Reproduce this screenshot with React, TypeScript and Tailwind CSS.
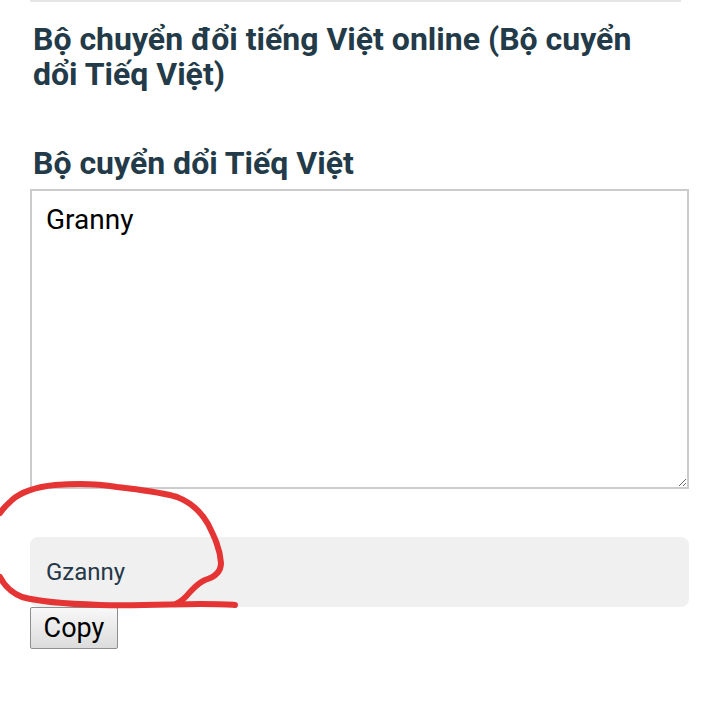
export default function App() {
  return (
    <div className="relative min-h-[724px] w-[717px] bg-white font-['Roboto',sans-serif]">
      <div className="pl-[30px] pr-[28px]">
        {/* top rule */}
        <div className="h-[2px] bg-[#e6e6e6] mr-[8px]" />

        <h1 className="mt-[20px] ml-[3px] max-w-[630px] text-[32px] leading-[35px] font-bold text-[#233a48]">
          Bộ chuyển đổi tiếng Việt online (Bộ cuyển dổi Tiếq Việt)
        </h1>

        <h2 className="mt-[54px] ml-[3px] text-[32px] leading-[35px] font-bold text-[#233a48]">
          Bộ cuyển dổi Tiếq Việt
        </h2>

        <textarea
          className="mt-[8px] block w-full h-[300px] border-2 border-[#cccccc] px-[14px] py-[12px] text-[28px] leading-[34px] text-black outline-none"
          defaultValue="Granny"
        />

        <div className="mt-[48px] h-[70px] rounded-[8px] bg-[#f0f0f0] px-[16px] pt-[21px] text-[24px] leading-[28px] text-[#253847]">
          Gzanny
        </div>

        <button className="block h-[42px] w-[88px] border border-[#8e8e8e] bg-gradient-to-b from-[#f8f8f8] to-[#dcdcdc] text-[27px] leading-none text-black rounded-[2px]">
          Copy
        </button>
      </div>

      {/* hand-drawn red annotation */}
      <svg
        className="absolute left-0 top-0 pointer-events-none"
        width="717"
        height="724"
        viewBox="0 0 717 724"
        fill="none"
      >
        <path
          d="M0 513 C 4 507 8 504 12 500 C 20 493 35 487 55 485 C 80 483 100 484 117 487 C 140 490 160 492 177 497 C 190 502 200 510 208 524 C 214 536 220 548 221 563 C 221 572 215 577 205 580 C 198 583 194 588 190 592 C 186 597 182 601 176 604"
          stroke="#e53434"
          strokeWidth="6"
          strokeLinecap="round"
          strokeLinejoin="round"
        />
        <path
          d="M0 577 C 4 585 10 592 22 597 C 40 602 70 604 100 605 C 140 606 175 604 200 604 C 215 604 228 604 235 605"
          stroke="#e53434"
          strokeWidth="6"
          strokeLinecap="round"
          strokeLinejoin="round"
        />
      </svg>
    </div>
  );
}
